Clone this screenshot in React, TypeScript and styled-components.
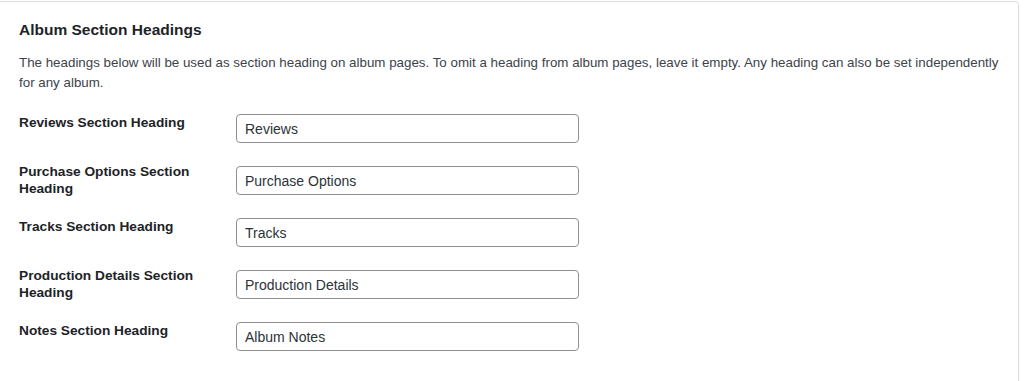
import React from "react";
import styled, { createGlobalStyle } from "styled-components";

const GlobalStyle = createGlobalStyle`
  html, body {
    margin: 0;
    padding: 0;
    background: #fff;
    overflow: hidden;
  }
  body {
    font-family: "Liberation Sans", Arial, sans-serif;
    color: #1d2327;
  }
`;

const Card = styled.section`
  margin: 1px 5px 0 -5px;
  min-height: 400px;
  box-sizing: border-box;
  padding: 17px 10px 0 23px;
  background: #fff;
  border: 1px solid #dcdcde;
  border-radius: 4px;
`;

const Title = styled.h2`
  margin: 0;
  font-size: 15.5px;
  line-height: 22px;
  font-weight: 700;
  color: #1d2327;
`;

const Description = styled.p`
  margin: 12px 0 0;
  font-size: 13.35px;
  line-height: 20px;
  color: #3c434a;
`;

const FieldGrid = styled.div`
  margin-top: 21px;
  display: grid;
  grid-template-columns: 217px 343px;
  grid-auto-rows: 52px;
`;

const FieldLabel = styled.label<{ $wrapped?: boolean }>`
  margin-top: ${(props) => (props.$wrapped ? "-3px" : "0")};
  padding-right: 20px;
  font-size: 13.7px;
  line-height: 17px;
  font-weight: 700;
  color: #1d2327;
`;

const TextInput = styled.input`
  box-sizing: border-box;
  width: 343px;
  height: 29px;
  margin: 0;
  padding: 0 8px;
  border: 1px solid #8c8f94;
  border-radius: 4px;
  background: #fff;
  font-family: inherit;
  font-size: 14px;
  color: #2c3338;
  outline: none;
`;

const fields = [
  { id: "reviews", label: "Reviews Section Heading", value: "Reviews" },
  {
    id: "purchase",
    label: "Purchase Options Section Heading",
    value: "Purchase Options",
    wrapped: true,
  },
  { id: "tracks", label: "Tracks Section Heading", value: "Tracks" },
  {
    id: "production",
    label: "Production Details Section Heading",
    value: "Production Details",
    wrapped: true,
  },
  { id: "notes", label: "Notes Section Heading", value: "Album Notes" },
];

export default function App() {
  return (
    <>
      <GlobalStyle />
      <Card>
        <Title>Album Section Headings</Title>
        <Description>
          The headings below will be used as section heading on album pages. To
          omit a heading from album pages, leave it empty. Any heading can also
          be set independently for any album.
        </Description>
        <FieldGrid>
          {fields.map((field) => (
            <React.Fragment key={field.id}>
              <FieldLabel htmlFor={field.id} $wrapped={field.wrapped}>
                {field.label}
              </FieldLabel>
              <div>
                <TextInput id={field.id} type="text" defaultValue={field.value} />
              </div>
            </React.Fragment>
          ))}
        </FieldGrid>
      </Card>
    </>
  );
}
